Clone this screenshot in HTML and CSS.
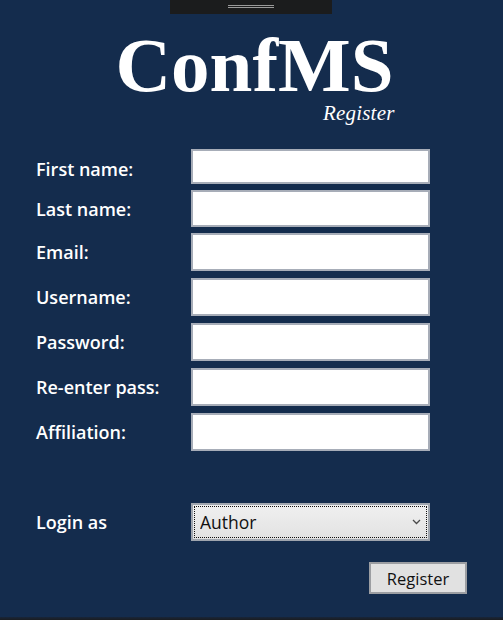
FILE: index.html
```html
<!DOCTYPE html>
<html lang="en">
<head>
<meta charset="utf-8">
<title>ConfMS - Register</title>
<link rel="stylesheet" href="styles.css">
</head>
<body>
<div class="page">
  <div class="handle-bar"><span class="grip"></span></div>
  <header class="header">
    <div class="brand">
      <h1 class="title">ConfMS</h1>
      <div class="subtitle">Register</div>
    </div>
  </header>
  <form class="form">
    <div class="row r1"><label class="label">First name:</label><input class="field h35" type="text"></div>
    <div class="row r2"><label class="label">Last name:</label><input class="field h37" type="text"></div>
    <div class="row r3"><label class="label">Email:</label><input class="field" type="text"></div>
    <div class="row"><label class="label">Username:</label><input class="field" type="text"></div>
    <div class="row"><label class="label">Password:</label><input class="field" type="password"></div>
    <div class="row"><label class="label">Re-enter pass:</label><input class="field" type="password"></div>
    <div class="row"><label class="label">Affiliation:</label><input class="field" type="text"></div>
    <div class="row login-row"><label class="label">Login as</label>
      <div class="select-wrap">
        <select class="select"><option>Author</option><option>Reviewer</option><option>Chair</option></select>
        <svg class="chevron" width="9" height="6" viewBox="0 0 9 6"><path d="M1 1 L4.5 4.5 L8 1" fill="none" stroke="#4a4a4a" stroke-width="1.3"/></svg>
      </div>
    </div>
    <div class="actions"><button class="button" type="button">Register</button></div>
  </form>
  <div class="bottom-edge"></div>
</div>
</body>
</html>
```
FILE: styles.css
```css
html, body {
  margin: 0;
  padding: 0;
}
body {
  background: #142c4d;
  font-family: "Open Sans", "Noto Sans", sans-serif;
  color: #fff;
}
.page {
  position: relative;
  height: 620px;
  display: flex;
  flex-direction: column;
  overflow: hidden;
}
.handle-bar {
  position: absolute;
  top: 0;
  left: 170px;
  width: 162px;
  height: 14px;
  background: #1b1c1d;
}
.grip {
  position: absolute;
  left: 58px;
  top: 5px;
  width: 46px;
  height: 1px;
  border-top: 1px solid #9a9a9a;
  border-bottom: 1px solid #9a9a9a;
}
.header {
  display: flex;
  justify-content: center;
  padding-top: 25px;
}
.brand {
  display: flex;
  flex-direction: column;
  align-items: flex-end;
  margin-left: 6px;
}
.title {
  margin: 0;
  font-family: "Liberation Serif", "Times New Roman", serif;
  font-weight: bold;
  font-size: 77px;
  line-height: 80px;
  color: #fff;
}
.subtitle {
  margin-right: -1px;
  font-family: "Liberation Serif", "Times New Roman", serif;
  font-style: italic;
  font-size: 21px;
  line-height: 16px;
  letter-spacing: 0.2px;
}
.form {
  display: flex;
  flex-direction: column;
  padding-left: 36px;
  margin-top: 28px;
}
.row {
  display: flex;
  align-items: center;
  margin-top: 7px;
}
.r1 { margin-top: 0; }
.r2, .r3 { margin-top: 6px; }
.r1 .label { padding-top: 5px; }
.label {
  width: 155px;
  font-weight: 600;
  font-size: 18px;
  line-height: 24px;
  color: #fff;
}
.field {
  box-sizing: border-box;
  width: 239px;
  height: 38px;
  margin: 0;
  border: 2px solid #a7adb8;
  background: #fff;
  padding: 0 4px;
  font-family: "Open Sans", sans-serif;
  font-size: 16px;
}
.field.h35 { height: 35px; }
.field.h37 { height: 37px; }
.login-row {
  margin-top: 52px;
}
.select-wrap {
  position: relative;
  width: 239px;
  height: 38px;
}
.select {
  appearance: none;
  -webkit-appearance: none;
  box-sizing: border-box;
  width: 239px;
  height: 38px;
  margin: 0;
  border: 2px solid #9fa5ae;
  background: linear-gradient(#f0f0f0, #e2e2e2);
  outline: 1px dotted #111;
  outline-offset: -4px;
  padding: 0 0 0 7px;
  font-family: "Open Sans", sans-serif;
  font-size: 17.5px;
  color: #111;
}
.chevron {
  position: absolute;
  left: 221px;
  top: 16px;
  pointer-events: none;
}
.actions {
  display: flex;
  justify-content: flex-end;
  padding-right: 36px;
  margin-top: 21px;
}
.button {
  box-sizing: border-box;
  width: 98px;
  height: 32px;
  margin: 0;
  border: 2px solid #9c9ea2;
  background: #e1e1e1;
  font-family: "Open Sans", sans-serif;
  font-size: 16.5px;
  color: #111;
  padding: 0;
}
.bottom-edge {
  margin-top: auto;
  height: 3px;
  background: linear-gradient(#17253a, #1b1d20);
}
```
